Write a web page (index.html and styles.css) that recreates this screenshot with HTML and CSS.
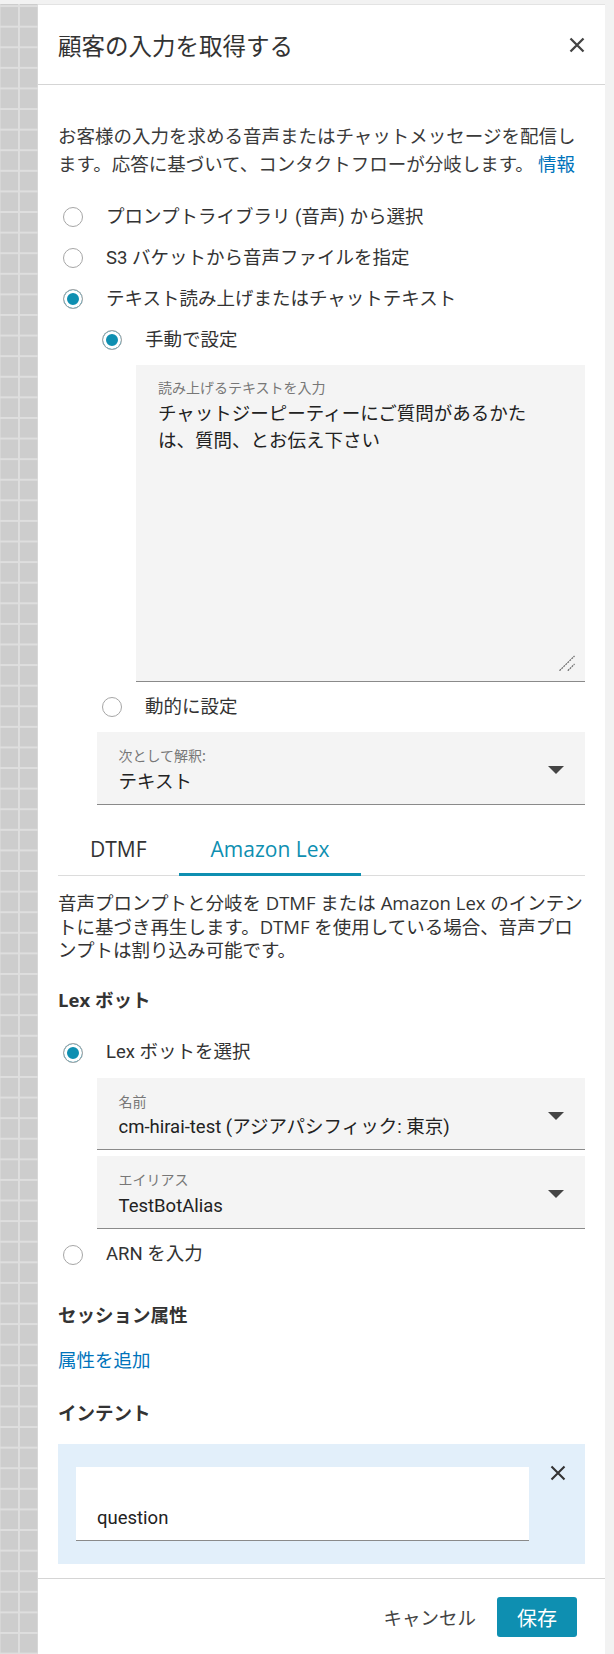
FILE: index.html
```html
<!DOCTYPE html>
<html lang="ja">
<head>
<meta charset="utf-8">
<title>顧客の入力を取得する</title>
<link rel="stylesheet" href="styles.css">
</head>
<body>
<div class="page">
  <div class="canvas"></div>
  <section class="panel">
    <header class="panel-header">
      <h1 class="title">顧客の入力を取得する</h1>
      <button class="icon-btn close" aria-label="閉じる">
        <svg width="16" height="16" viewBox="0 0 16 16"><path d="M1.5 1.5L14.5 14.5M14.5 1.5L1.5 14.5" stroke="#444" stroke-width="2.3" fill="none"/></svg>
      </button>
    </header>

    <div class="panel-body">
      <p class="desc">お客様の入力を求める音声またはチャットメッセージを配信し<br>ます。応答に基づいて、コンタクトフローが分岐します。 <a class="link">情報</a></p>

      <div class="radio-group">
        <div class="radio-row"><span class="radio"></span><span class="radio-label">プロンプトライブラリ (音声) から選択</span></div>
        <div class="radio-row"><span class="radio"></span><span class="radio-label">S3 バケットから音声ファイルを指定</span></div>
        <div class="radio-row"><span class="radio checked"></span><span class="radio-label">テキスト読み上げまたはチャットテキスト</span></div>
        <div class="radio-row nested"><span class="radio checked"></span><span class="radio-label">手動で設定</span></div>
      </div>

      <div class="textarea">
        <div class="field-label">読み上げるテキストを入力</div>
        <div class="textarea-value">チャットジーピーティーにご質問があるかた<br>は、質問、とお伝え下さい</div>
        <svg class="resize" width="16" height="16" viewBox="0 0 16 16"><path d="M0.5 15.7L15.5 1M8.8 15.7L15.5 9" stroke="#6a6a6a" stroke-width="1.2" stroke-dasharray="2 0.8" fill="none"/></svg>
      </div>

      <div class="radio-row nested gap-top"><span class="radio"></span><span class="radio-label">動的に設定</span></div>

      <div class="select">
        <div class="select-text">
          <div class="field-label">次として解釈:</div>
          <div class="select-value">テキスト</div>
        </div>
        <svg class="caret" width="16" height="8" viewBox="0 0 16 8"><path d="M0 0H16L8 8Z" fill="#444"/></svg>
      </div>

      <nav class="tabs">
        <div class="tab">DTMF</div>
        <div class="tab active">Amazon Lex</div>
      </nav>

      <p class="desc2">音声プロンプトと分岐を DTMF または Amazon Lex のインテン<br>トに基づき再生します。DTMF を使用している場合、音声プロ<br>ンプトは割り込み可能です。</p>

      <h2 class="heading">Lex ボット</h2>

      <div class="radio-row first"><span class="radio checked"></span><span class="radio-label">Lex ボットを選択</span></div>

      <div class="select">
        <div class="select-text">
          <div class="field-label">名前</div>
          <div class="select-value">cm-hirai-test (アジアパシフィック: 東京)</div>
        </div>
        <svg class="caret" width="16" height="8" viewBox="0 0 16 8"><path d="M0 0H16L8 8Z" fill="#444"/></svg>
      </div>

      <div class="select second">
        <div class="select-text">
          <div class="field-label">エイリアス</div>
          <div class="select-value">TestBotAlias</div>
        </div>
        <svg class="caret" width="16" height="8" viewBox="0 0 16 8"><path d="M0 0H16L8 8Z" fill="#444"/></svg>
      </div>

      <div class="radio-row arn"><span class="radio"></span><span class="radio-label">ARN を入力</span></div>

      <h2 class="heading section">セッション属性</h2>
      <a class="link add-link">属性を追加</a>

      <h2 class="heading section">インテント</h2>

      <div class="intent">
        <div class="intent-input">question</div>
        <button class="icon-btn intent-remove" aria-label="削除">
          <svg width="16" height="16" viewBox="0 0 16 16"><path d="M1.5 1.5L14.5 14.5M14.5 1.5L1.5 14.5" stroke="#333" stroke-width="2.1" fill="none"/></svg>
        </button>
      </div>
    </div>

    <footer class="panel-footer">
      <button class="btn-cancel">キャンセル</button>
      <button class="btn-save">保存</button>
    </footer>
  </section>
</div>
</body>
</html>
```
FILE: styles.css
```css
* { box-sizing: border-box; }

html, body { margin: 0; padding: 0; }

body {
  width: 614px;
  background: #f2f2f2;
  padding-top: 4px;
  font-family: Roboto, "Noto Sans CJK JP", sans-serif;
  color: #333;
}

.page {
  display: flex;
  align-items: stretch;
}

.canvas {
  width: 38px;
  flex: none;
  background-color: #cdcdcd;
  background-image:
    linear-gradient(to bottom, #dedede 1.6px, transparent 1.6px),
    linear-gradient(to right, #dedede 1.6px, transparent 1.6px);
  background-size: 100% 20.6px, 19.4px 100%;
  background-position: 0 1.1px, 18px 0;
}

.panel {
  width: 567px;
  flex: none;
  background: #fff;
  border-top: 1px solid #e3e3e3;
}

.panel-header {
  height: 80px;
  border-bottom: 1px solid #d5d5d5;
  display: flex;
  align-items: center;
  justify-content: space-between;
  padding: 0 20px;
}

.title {
  margin: 0;
  font-family: "Noto Sans CJK JP", sans-serif;
  font-size: 23.5px;
  font-weight: 400;
  color: #333;
}

.icon-btn {
  display: block;
  width: 16px;
  height: 16px;
  padding: 0;
  border: 0;
  background: none;
}

.icon-btn svg { display: block; }

.panel-body {
  padding: 36px 20px 14px;
}

.desc {
  margin: 0;
  font-family: "Noto Sans CJK JP", sans-serif;
  font-size: 18.5px;
  line-height: 28px;
  white-space: nowrap;
  color: #3a3a3a;
}

.link {
  color: #0073bb;
  text-decoration: none;
}

.radio-group {
  margin-top: 19.5px;
}

.radio-row {
  display: flex;
  align-items: center;
  gap: 23px;
  height: 41px;
  padding-left: 5px;
  font-size: 18.5px;
  line-height: 27px;
  color: #333;
}

.radio-row.nested { padding-left: 44px; }
.radio-row.gap-top { margin-top: 4.5px; }
.radio-row.first { margin-top: 20.5px; }
.radio-row.arn { margin-top: 5.5px; }

.radio {
  width: 20px;
  height: 20px;
  flex: none;
  border: 1px solid #a6a6a6;
  border-radius: 50%;
  background: #fff;
}

.radio.checked {
  background: #0e8fb1;
  box-shadow: inset 0 0 0 3px #fff;
}

.textarea {
  position: relative;
  margin: 4.5px 0 0 78px;
  height: 317px;
  padding: 12px 22px;
  background: #f4f4f4;
  border-bottom: 1px solid #8a8a8a;
}

.field-label {
  font-family: "Noto Sans CJK JP", sans-serif;
  font-size: 14px;
  line-height: 20px;
  color: #777;
}

.textarea-value {
  margin-top: 4px;
  font-size: 18.5px;
  line-height: 27px;
  white-space: nowrap;
  color: #222;
}

.resize {
  position: absolute;
  right: 10px;
  bottom: 10px;
}

.select {
  margin: 4.5px 0 0 39px;
  height: 72.5px;
  padding: 5px 21px 0 21.5px;
  display: flex;
  align-items: center;
  justify-content: space-between;
  background: #f4f4f4;
  border-bottom: 1px solid #8a8a8a;
}

.select.second { margin-top: 6px; }

.select-value {
  margin-top: 3.5px;
  font-size: 18.5px;
  line-height: 27px;
  color: #222;
  white-space: nowrap;
}

.caret { display: block; flex: none; }

.tabs {
  display: flex;
  margin-top: 21.5px;
  height: 50px;
  border-bottom: 1px solid #dcdcdc;
}

.tab {
  height: 50px;
  margin-bottom: -1px;
  padding: 0 32px;
  line-height: 47px;
  border-bottom: 3px solid transparent;
  font-family: "Open Sans", "Noto Sans CJK JP", sans-serif;
  font-size: 21px;
  color: #333;
}

.tab.active {
  color: #0e8fb1;
  border-bottom-color: #0e8fb1;
}

.desc2 {
  margin: 15.3px 0 0;
  font-family: "Open Sans", "Noto Sans CJK JP", sans-serif;
  font-size: 18.5px;
  line-height: 23.3px;
  white-space: nowrap;
  color: #333;
}

.heading {
  margin: 26.5px 0 0;
  font-family: "Open Sans", "Noto Sans CJK JP", sans-serif;
  font-size: 18.5px;
  line-height: 24px;
  font-weight: 700;
  color: #333;
}

.heading.section { margin-top: 28px; }

.add-link {
  display: block;
  margin-top: 18.5px;
  font-family: "Noto Sans CJK JP", sans-serif;
  font-size: 18.5px;
  line-height: 27px;
}

.intent {
  display: flex;
  align-items: flex-start;
  gap: 20.6px;
  margin-top: 19.5px;
  padding: 23.3px 19px 23.4px 18px;
  background: #e2effa;
}

.intent-input {
  flex: 1;
  height: 73.3px;
  padding: 37.2px 21px 0;
  background: #fff;
  border-bottom: 1px solid #8a8a8a;
  font-size: 18.5px;
  line-height: 27px;
  color: #222;
}

.intent-remove { margin-top: -2px; }

.panel-footer {
  display: flex;
  justify-content: flex-end;
  align-items: center;
  gap: 21px;
  padding: 18.3px 28px 17.7px;
  border-top: 1px solid #d5d5d5;
}

.btn-cancel,
.btn-save {
  font-family: "Noto Sans CJK JP", sans-serif;
  border: 0;
  padding: 0;
  cursor: pointer;
}

.btn-cancel {
  background: none;
  font-size: 18.5px;
  line-height: 27px;
  color: #444;
}

.btn-save {
  width: 80px;
  height: 40px;
  border-radius: 3px;
  background: #0e8fb1;
  color: #fff;
  font-size: 20px;
}
```
